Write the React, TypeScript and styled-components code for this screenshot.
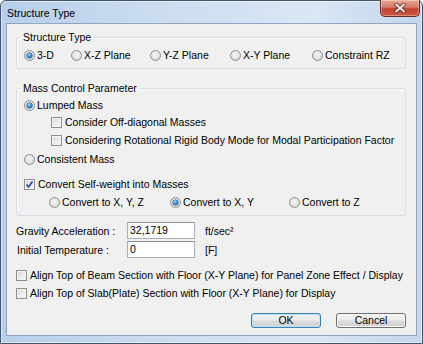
import React from 'react';
import styled, { createGlobalStyle, css } from 'styled-components';

const GlobalStyle = createGlobalStyle`
  html, body {
    margin: 0;
    padding: 0;
    background: #ffffff;
  }
  body {
    font-family: "Liberation Sans", Arial, sans-serif;
    font-size: 10.5px;
    color: #000;
  }
`;

const Window = styled.div`
  width: 423px;
  height: 344px;
  box-sizing: border-box;
  border: 1px solid #44566d;
  border-radius: 6px 6px 0 0;
  background: linear-gradient(to right, #b7cfea 0%, #cfdff1 45%, #d9e6f4 75%, #c3d6ec 100%);
  padding: 0 5px 7px 5px;
  display: flex;
  flex-direction: column;
  box-shadow: inset 0 0 0 1px rgba(255, 255, 255, 0.5);
`;

const TitleBar = styled.div`
  height: 23px;
  display: flex;
  align-items: flex-start;
  justify-content: space-between;
`;

const TitleText = styled.div`
  font-size: 10.5px;
  line-height: 14px;
  padding: 5px 0 0 1px;
  color: #000;
`;

const CloseButton = styled.div`
  width: 40px;
  height: 17px;
  margin: -1px -3px 0 0;
  box-sizing: border-box;
  border: 1px solid #6a2b22;
  border-top: none;
  border-radius: 0 0 5px 5px;
  background: linear-gradient(to bottom, #e8a696 0%, #d7796a 45%, #c2412f 55%, #cd5a43 100%);
  box-shadow: inset 0 0 0 1px rgba(255, 255, 255, 0.35);
  display: flex;
  align-items: center;
  justify-content: center;
`;

const Client = styled.div`
  flex: 1;
  border: 1px solid #8fa5c1;
  background: #f0f0f0;
  display: flex;
  flex-direction: column;
  padding: 6px 10px 7px 9px;
`;

const Group = styled.fieldset<{ $mt?: number; $pb: number }>`
  margin: ${p => p.$mt ?? 0}px 0 0 0;
  padding: 0 0 ${p => p.$pb}px 0;
  border: 1px solid #d5dfe5;
  border-radius: 3px;
  box-shadow: inset 1px 1px 0 #fbfcfd;
  min-width: 0;
`;

const Legend = styled.legend`
  margin-left: 4px;
  padding: 0 2px;
  line-height: 14px;
  font-size: 10.5px;
`;

const Row = styled.div<{ $mt?: number; $indent?: number }>`
  display: flex;
  align-items: center;
  height: 14px;
  margin-top: ${p => p.$mt ?? 0}px;
  padding-left: ${p => p.$indent ?? 0}px;
`;

const RadioGrid = styled.div<{ $mt?: number; $cols: string; $indent: number }>`
  display: grid;
  grid-template-columns: ${p => p.$cols};
  align-items: center;
  height: 14px;
  margin-top: ${p => p.$mt ?? 0}px;
  padding-left: ${p => p.$indent}px;
`;

const Option = styled.label`
  display: flex;
  align-items: center;
  gap: 2px;
  white-space: nowrap;
  line-height: 14px;
`;

const CheckOption = styled(Option)`
  gap: 3px;
`;

const RadioDot = styled.span<{ $on?: boolean }>`
  width: 11px;
  height: 11px;
  box-sizing: border-box;
  border-radius: 50%;
  border: 1px solid #8e8f8f;
  background: radial-gradient(circle at 50% 40%, #f6f6f6 0%, #e2e2e2 55%, #cfcfcf 100%);
  display: flex;
  align-items: center;
  justify-content: center;
  flex-shrink: 0;
  ${p =>
    p.$on &&
    css`
      &::after {
        content: '';
        width: 5px;
        height: 5px;
        border-radius: 50%;
        background: radial-gradient(circle at 40% 35%, #9ad4fb 0%, #2a8ad8 50%, #0c4b8e 100%);
        box-shadow: 0 0 0 0.5px #0f3f74;
      }
    `}
`;

const CheckBox = styled.span`
  width: 11px;
  height: 11px;
  box-sizing: border-box;
  border: 1px solid #8f8f8f;
  background: linear-gradient(135deg, #d9d9d9 0%, #ececec 60%, #fafafa 100%);
  box-shadow: inset 0 0 0 1px #f4f4f4;
  display: flex;
  align-items: center;
  justify-content: center;
  flex-shrink: 0;
`;

const FieldRow = styled.div<{ $mt: number }>`
  display: flex;
  align-items: center;
  height: 17px;
  margin-top: ${p => p.$mt}px;
`;

const FieldLabel = styled.span<{ $pl?: number }>`
  width: 111px;
  padding-left: ${p => p.$pl ?? 0}px;
  box-sizing: border-box;
  white-space: nowrap;
`;

const TextInput = styled.div`
  width: 68px;
  height: 17px;
  box-sizing: border-box;
  border: 1px solid #abadb3;
  border-top-color: #8e9199;
  background: #fff;
  padding: 0 2px;
  line-height: 14px;
`;

const Unit = styled.span`
  margin-left: 10px;
`;

const ButtonRow = styled.div`
  display: flex;
  justify-content: flex-end;
  gap: 15px;
  margin-top: 13px;
`;

const Button = styled.div<{ $default?: boolean }>`
  width: 70px;
  height: 15px;
  box-sizing: border-box;
  border: 1px solid ${p => (p.$default ? '#3c7fb1' : '#707070')};
  border-radius: 3px;
  background: linear-gradient(to bottom, #f2f2f2 0%, #ebebeb 49%, #dddddd 51%, #cfcfcf 100%);
  box-shadow: inset 0 0 0 1px ${p => (p.$default ? '#b6e3fb' : '#fcfcfc')};
  display: flex;
  align-items: center;
  justify-content: center;
  line-height: 13px;
`;

const Radio = ({ on, label }: { on?: boolean; label: string }) => (
  <Option>
    <RadioDot $on={on} />
    {label}
  </Option>
);

const Check = ({ on, label }: { on?: boolean; label: string }) => (
  <CheckOption>
    <CheckBox>
      {on && (
        <svg width="9" height="9" viewBox="0 0 9 9">
          <path d="M1.5 4.5 L3.6 7 L7.5 1.5" stroke="#21479b" strokeWidth="1.6" fill="none" />
        </svg>
      )}
    </CheckBox>
    {label}
  </CheckOption>
);

const App: React.FC = () => {
  return (
    <>
      <GlobalStyle />
      <Window>
        <TitleBar>
          <TitleText>Structure Type</TitleText>
          <CloseButton>
            <svg width="12" height="10" viewBox="0 0 12 10">
              <path d="M2 1.5 L10 8.5 M10 1.5 L2 8.5" stroke="#5b2018" strokeWidth="3.4" strokeLinecap="square" />
              <path d="M2 1.5 L10 8.5 M10 1.5 L2 8.5" stroke="#ffffff" strokeWidth="1.8" strokeLinecap="square" />
            </svg>
          </CloseButton>
        </TitleBar>

        <Client>
          <Group $pb={6}>
            <Legend>Structure Type</Legend>
            <RadioGrid $mt={4} $indent={7} $cols="47px 79px 80px 82px auto">
              <Radio on label="3-D" />
              <Radio label="X-Z Plane" />
              <Radio label="Y-Z Plane" />
              <Radio label="X-Y Plane" />
              <Radio label="Constraint RZ" />
            </RadioGrid>
          </Group>

          <Group $mt={12} $pb={6}>
            <Legend>Mass Control Parameter</Legend>
            <Row $mt={3} $indent={7}>
              <Radio on label="Lumped Mass" />
            </Row>
            <Row $mt={3} $indent={34}>
              <Check label="Consider Off-diagonal Masses" />
            </Row>
            <Row $mt={4} $indent={34}>
              <Check label="Considering Rotational Rigid Body Mode for Modal Participation Factor" />
            </Row>
            <Row $mt={5} $indent={7}>
              <Radio label="Consistent Mass" />
            </Row>
            <Row $mt={11} $indent={7}>
              <Check on label="Convert Self-weight into Masses" />
            </Row>
            <RadioGrid $mt={4} $indent={32} $cols="121px 119px auto">
              <Radio label="Convert to X, Y, Z" />
              <Radio on label="Convert to X, Y" />
              <Radio label="Convert to Z" />
            </RadioGrid>
          </Group>

          <FieldRow $mt={6}>
            <FieldLabel>Gravity Acceleration :</FieldLabel>
            <TextInput>32,1719</TextInput>
            <Unit>ft/sec²</Unit>
          </FieldRow>
          <FieldRow $mt={2}>
            <FieldLabel $pl={1}>Initial Temperature :</FieldLabel>
            <TextInput>0</TextInput>
            <Unit>[F]</Unit>
          </FieldRow>

          <Row $mt={10}>
            <Check label="Align Top of Beam Section with Floor (X-Y Plane) for Panel Zone Effect / Display" />
          </Row>
          <Row $mt={4}>
            <Check label="Align Top of Slab(Plate) Section with Floor (X-Y Plane) for Display" />
          </Row>

          <ButtonRow>
            <Button $default>OK</Button>
            <Button>Cancel</Button>
          </ButtonRow>
        </Client>
      </Window>
    </>
  );
};

export default App;
